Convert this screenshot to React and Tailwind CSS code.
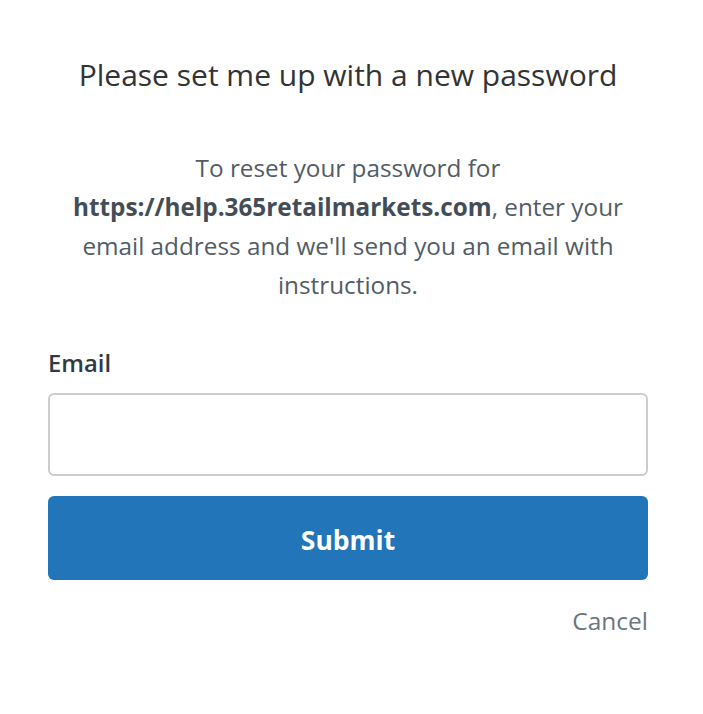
export default function App() {
  return (
    <div className="w-[703px] h-[714px] bg-white" style={{ fontFamily: '"Open Sans", "Noto Sans", sans-serif' }}>
      <div className="w-[600px] ml-12 pt-[55px]">
        <h1 className="text-center text-[30px] leading-[40px] text-[#333333] font-normal">
          Please set me up with a new password
        </h1>
        <p className="mt-[53px] text-center text-[24.3px] leading-[39px] text-[#525c66] px-4">
          To reset your password for{" "}
          <span className="font-bold text-[#434d57]">https://help.365retailmarkets.com</span>, enter your email
          address and we'll send you an email with instructions.
        </p>
        <label className="block mt-[44px] text-[23.8px] leading-[30px] font-semibold text-[#2e3a46]">Email</label>
        <input
          type="email"
          className="block mt-[15px] w-full h-[83px] rounded-[6px] border-2 border-[#cccccc] bg-white outline-none"
        />
        <button className="mt-[20px] w-full h-[84px] pt-[5px] rounded-[6px] bg-[#2175b8] text-white text-[26.5px] font-bold">
          Submit
        </button>
        <div className="mt-[26px] text-right text-[24.5px] leading-[30px] text-[#6b7580]">Cancel</div>
      </div>
    </div>
  );
}
